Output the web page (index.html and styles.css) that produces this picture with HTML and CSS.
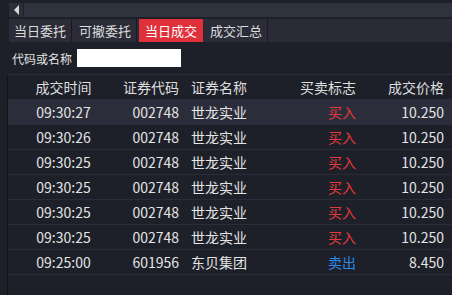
FILE: index.html
```html
<!DOCTYPE html>
<html lang="zh-CN">
<head>
  <meta charset="UTF-8" />
  <title>当日成交</title>
  <link rel="stylesheet" href="styles.css">
</head>
<body>

  <!-- SCROLL BAR -->
  <div class="scrollbar">
    <div class="scroll-btn"><span class="arrow"></span></div>
    <div class="scroll-track"></div>
  </div>

  <!-- TABS -->
  <div class="tabs">
    <div class="tab">当日委托</div>
    <div class="tab">可撤委托</div>
    <div class="tab active">当日成交</div>
    <div class="tab">成交汇总</div>
  </div>

  <!-- FILTER -->
  <div class="filter">
    <label for="codeInput">代码或名称</label>
    <input id="codeInput" type="text" />
  </div>

  <!-- DEALS TABLE -->
  <div class="grid-wrap">
    <table class="deals">
      <colgroup>
        <col class="c-time">
        <col class="c-code">
        <col class="c-name">
        <col class="c-flag">
        <col class="c-price">
      </colgroup>
      <thead>
        <tr>
          <th class="t-center">成交时间</th>
          <th class="t-right">证券代码</th>
          <th class="t-left">证券名称</th>
          <th class="t-right">买卖标志</th>
          <th class="t-right last">成交价格</th>
        </tr>
      </thead>
      <tbody>
        <tr class="selected">
          <td class="t-center">09:30:27</td><td class="t-right">002748</td><td class="t-left">世龙实业</td><td class="t-right buy">买入</td><td class="t-right last">10.250</td>
        </tr>
        <tr>
          <td class="t-center">09:30:26</td><td class="t-right">002748</td><td class="t-left">世龙实业</td><td class="t-right buy">买入</td><td class="t-right last">10.250</td>
        </tr>
        <tr>
          <td class="t-center">09:30:25</td><td class="t-right">002748</td><td class="t-left">世龙实业</td><td class="t-right buy">买入</td><td class="t-right last">10.250</td>
        </tr>
        <tr>
          <td class="t-center">09:30:25</td><td class="t-right">002748</td><td class="t-left">世龙实业</td><td class="t-right buy">买入</td><td class="t-right last">10.250</td>
        </tr>
        <tr>
          <td class="t-center">09:30:25</td><td class="t-right">002748</td><td class="t-left">世龙实业</td><td class="t-right buy">买入</td><td class="t-right last">10.250</td>
        </tr>
        <tr>
          <td class="t-center">09:30:25</td><td class="t-right">002748</td><td class="t-left">世龙实业</td><td class="t-right buy">买入</td><td class="t-right last">10.250</td>
        </tr>
        <tr>
          <td class="t-center">09:25:00</td><td class="t-right">601956</td><td class="t-left">东贝集团</td><td class="t-right sell">卖出</td><td class="t-right last">8.450</td>
        </tr>
      </tbody>
    </table>
  </div>

</body>
</html>
```

FILE: styles.css
```css
body {
  margin: 0;
  width: 452px;
  height: 295px;
  overflow: hidden;
  background: #1d2029;
  color: #e4e4e4;
  font-family: "Segoe UI", "Noto Sans CJK SC", sans-serif;
}

.scrollbar {
  display: flex;
  height: 14px;
  margin-top: 3px;
  padding-left: 9px;
}

.scroll-btn {
  width: 14px;
  background: #2b2f39;
  border-right: 1px solid #20232b;
  display: flex;
  align-items: center;
  justify-content: center;
}

.arrow {
  width: 0;
  height: 0;
  border-top: 5px solid transparent;
  border-bottom: 5px solid transparent;
  border-right: 5px solid #d8d8d8;
}

.scroll-track {
  flex: 1;
  background: #2e333d;
}

.tabs {
  display: flex;
  height: 23px;
  margin-top: 2px;
  margin-left: 9px;
  background: #2a2b37;
}

.tab {
  width: 62px;
  margin-right: 2px;
  line-height: 23px;
  text-align: center;
  font-size: 13px;
  background: #2b2c38;
  border-right: 1px solid #191b22;
  color: #dcdcdc;
}

.tab.active {
  background: #e0313a;
  color: #fff;
  border-right: none;
  width: 64px;
}

.filter {
  display: flex;
  align-items: center;
  height: 32px;
  padding-left: 12px;
  font-size: 12px;
}

.filter label {
  width: 65px;
}

.filter input {
  width: 104px;
  height: 18px;
  padding: 0;
  border: none;
  background: #fff;
}

.grid-wrap {
  border-top: 1px solid #2b2e38;
  border-left: 1px solid #12141a;
  margin-left: 7px;
  height: 230px;
}

.deals {
  width: 445px;
  border-collapse: collapse;
  table-layout: fixed;
  font-size: 14px;
}

.c-time { width: 111px; }
.c-code { width: 66px; }
.c-name { width: 105px; }
.c-flag { width: 72px; }
.c-price { width: 91px; }

.deals th {
  height: 24px;
  font-weight: normal;
  color: #dedede;
}

.deals td {
  height: 24px;
  border-top: 1px solid #2a2d37;
  padding: 0;
}

.deals tbody tr:last-child td {
  border-bottom: 1px solid #2a2d37;
}

.deals th {
  padding: 0;
}

.t-center { text-align: center; }
.t-right { text-align: right; padding-right: 6px !important; }
.t-left { text-align: left; padding-left: 6px !important; }
.last { padding-right: 9px !important; }

.selected td {
  background: #2c2d3b;
}

.buy { color: #e63a3a; }
.sell { color: #2a8ae6; }
```
